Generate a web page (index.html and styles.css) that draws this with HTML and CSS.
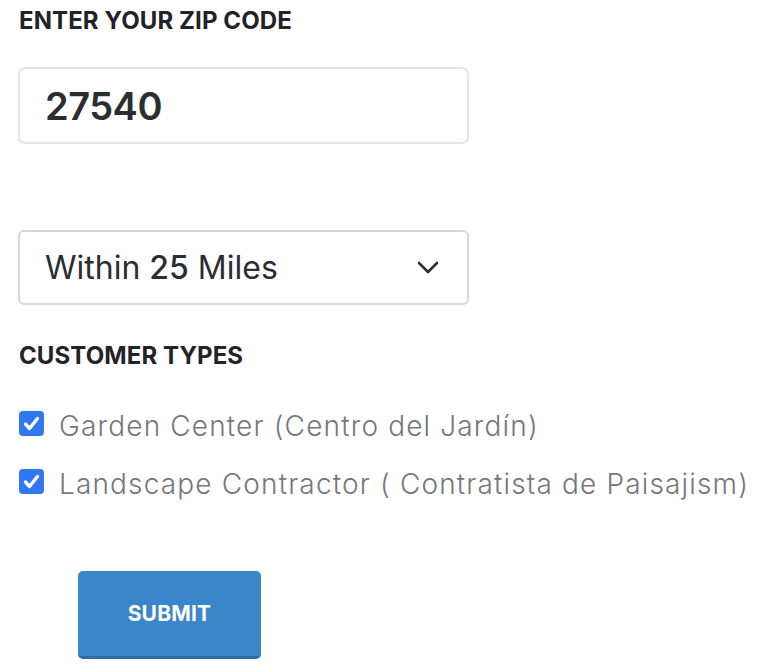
FILE: index.html
```html
<!DOCTYPE html>
<html>
	<head>
		<meta charset="utf-8">
		<title>Find a dealer</title>
		<link rel="stylesheet" href="styles.css">
	</head>
	<body>
		<form class="finder">
			<!-- zip -->
			<h2 class="field-title">ENTER YOUR ZIP CODE</h2>
			<div class="zip-box">27540</div>

			<!-- radius, drawn by hand so the number can sit in its own span -->
			<div class="radius-box">
				<span class="radius-text">Within <span class="num">25</span> Miles</span>
				<svg class="chevron" width="22" height="13" viewBox="0 0 22 13">
					<path d="M2 2 L11 11 L20 2" fill="none" stroke="#2b2d31" stroke-width="2.6" stroke-linecap="round" stroke-linejoin="round"/>
				</svg>
			</div>

			<h2 class="field-title types-title">CUSTOMER TYPES</h2>
			<ul class="type-list">
				<li>
					<span class="check"><svg width="25" height="25" viewBox="0 0 25 25"><path d="M6.5 13 L10.5 17.5 L18.5 7.5" fill="none" stroke="#fff" stroke-width="3.4" stroke-linecap="round" stroke-linejoin="round"/></svg></span>
					<span class="type-name">Garden Center (Centro del Jardín)</span>
				</li>
				<li>
					<span class="check"><svg width="25" height="25" viewBox="0 0 25 25"><path d="M6.5 13 L10.5 17.5 L18.5 7.5" fill="none" stroke="#fff" stroke-width="3.4" stroke-linecap="round" stroke-linejoin="round"/></svg></span>
					<span class="type-name">Landscape Contractor ( Contratista de Paisajism)</span>
				</li>
			</ul>

			<div class="actions">
				<button type="button" class="btn-submit">SUBMIT</button>
			</div>
		</form>
	</body>
</html>
```

FILE: styles.css
```css
*{
	margin: 0;
	padding: 0;
	box-sizing: border-box;
}
body{
	background: #fff;
	font-family: Inter, "Noto Sans", sans-serif;
}
.finder{
	width: 760px;
	padding: 6px 0 0 18px;
}
.field-title{
	font-size: 24px;
	line-height: 30px;
	font-weight: 700;
	letter-spacing: 0.1px;
	color: #222326;
	padding-left: 1px;
}
.zip-box{
	margin-top: 31px;
	width: 451px;
	height: 77px;
	border: 2px solid #e5e5e5;
	border-radius: 7px;
	padding-left: 25px;
	display: flex;
	align-items: center;
	font-size: 38px;
	font-weight: 600;
	color: #2b2d31;
	letter-spacing: -0.5px;
}
.radius-box{
	margin-top: 86px;
	width: 451px;
	height: 75px;
	border: 2px solid #d4d7db;
	border-radius: 6px;
	padding: 0 28px 0 25px;
	display: flex;
	align-items: center;
	justify-content: space-between;
	font-size: 32px;
	color: #2b2d31;
}
.radius-box .num{
	font-weight: 500;
}
.types-title{
	margin-top: 36px;
}
.type-list{
	list-style: none;
	margin-top: 39px;
}
.type-list li{
	display: flex;
	align-items: center;
	gap: 15px;
	height: 26px;
	margin-bottom: 32px;
}
.check{
	display: block;
	width: 25px;
	height: 25px;
	border-radius: 4px;
	background: #2f78f2;
	margin-left: 1px;
}
.check svg{
	display: block;
}
.type-name{
	padding-top: 6px;
	font-size: 28px;
	font-weight: 300;
	color: #76777a;
	letter-spacing: 1.15px;
}
.actions{
	padding-left: 60px;
	margin-top: 77px;
}
.btn-submit{
	width: 183px;
	height: 88px;
	border: none;
	border-bottom: 3px solid #2d6ba3;
	border-radius: 5px;
	background: #3987c8;
	color: #fff;
	font-family: Inter, "Noto Sans", sans-serif;
	font-size: 21px;
	font-weight: 700;
	letter-spacing: 0.2px;
}
```
